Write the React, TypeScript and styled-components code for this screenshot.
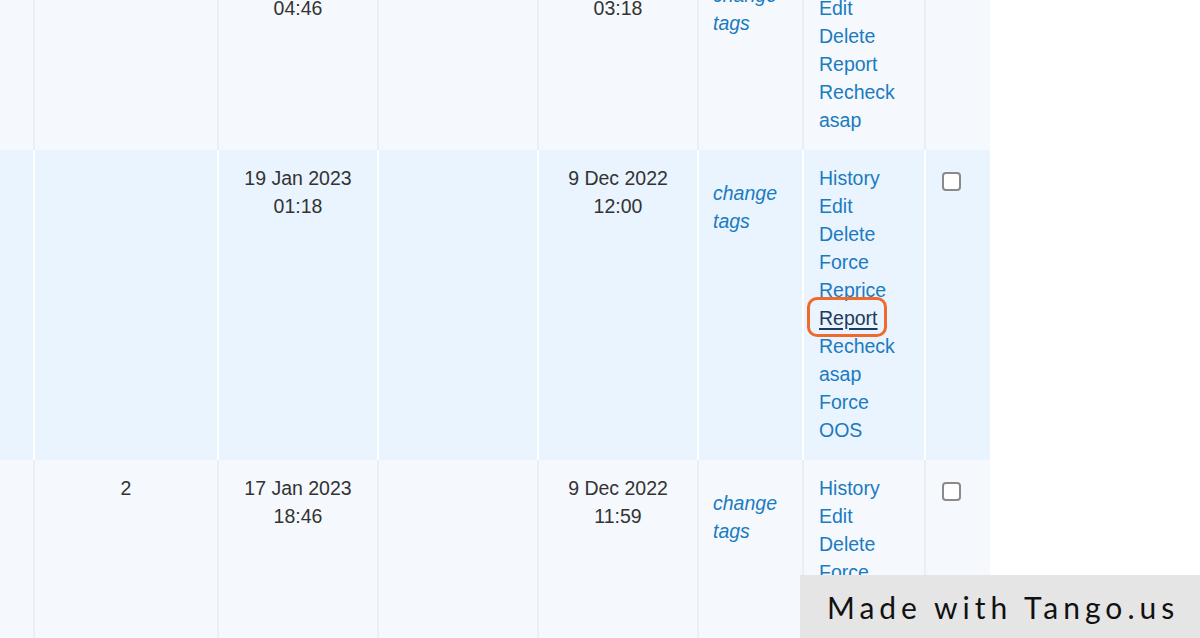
import React from "react";
import styled, { createGlobalStyle } from "styled-components";

const Global = createGlobalStyle`
  html, body { margin: 0; padding: 0; background: #ffffff; }
  body { font-family: "Liberation Sans", Arial, Helvetica, sans-serif; overflow: hidden; }
  #root { width: 1200px; height: 638px; overflow: hidden; position: relative; }
`;

const Viewport = styled.div`
  width: 1200px;
  height: 638px;
  overflow: hidden;
  position: relative;
  background: #ffffff;
`;

const Table = styled.table`
  border-collapse: collapse;
  table-layout: fixed;
  width: 990px;
  margin-top: -48px;
  font-size: 19.5px;
  line-height: 28px;
  color: #333333;
`;

const Row = styled.tr<{ $hl?: boolean }>`
  background: ${(p) => (p.$hl ? "#eaf4fe" : "#f5f9fd")};
  & > td {
    border-left: 2px solid ${(p) => (p.$hl ? "#ffffff" : "#e7eff9")};
  }
  & > td:first-child { border-left: none; }
`;

const Cell = styled.td<{ $align?: "left" | "center"; $h: number }>`
  vertical-align: top;
  text-align: ${(p) => p.$align ?? "center"};
  padding: 14px 14px 16px 14px;
  height: ${(p) => p.$h}px;
  box-sizing: border-box;
`;

const LinkCell = styled(Cell)`
  padding-left: 15px;
  padding-right: 6px;
`;

const Line = styled.div`
  white-space: nowrap;
`;

const TagLink = styled.a`
  display: block;
  margin-top: 15px;
  color: #1b7bc1;
  font-style: italic;
  text-decoration: none;
`;

const ActionLink = styled.a<{ $active?: boolean }>`
  display: block;
  color: ${(p) => (p.$active ? "#1e3a5c" : "#1b7bc1")};
  text-decoration: ${(p) => (p.$active ? "underline" : "none")};
  text-underline-offset: 3px;
  text-decoration-thickness: 1.5px;
  position: relative;
  width: max-content;
`;

const Highlight = styled.span`
  position: absolute;
  left: -12px;
  top: -7px;
  width: 80px;
  height: 40px;
  border: 3px solid #f06a2b;
  border-radius: 10px;
  box-sizing: border-box;
  pointer-events: none;
`;

const Check = styled.input`
  appearance: none;
  -webkit-appearance: none;
  margin: 8px 0 0 2px;
  width: 19px;
  height: 19px;
  border: 2px solid #8a8a8a;
  border-radius: 4px;
  background: #ffffff;
  box-sizing: border-box;
  display: block;
`;

const Badge = styled.div`
  position: absolute;
  right: 0;
  bottom: 0;
  width: 400px;
  height: 63px;
  background: #e5e5e5;
  display: flex;
  align-items: center;
  padding-left: 27px;
  box-sizing: border-box;
  font-family: Lato, "Open Sans", sans-serif;
  font-size: 30px;
  letter-spacing: 5px;
  color: #111111;
`;

type RowData = {
  hl?: boolean;
  h: number;
  count: string;
  date1: [string, string];
  date2: [string, string];
  links: string[];
  active?: string;
  checkbox: boolean;
};

const rows: RowData[] = [
  {
    h: 198,
    count: "",
    date1: ["18 Jan 2023", "04:46"],
    date2: ["9 Dec 2022", "03:18"],
    links: ["History", "Edit", "Delete", "Report", "Recheck", "asap"],
    checkbox: false,
  },
  {
    hl: true,
    h: 310,
    count: "",
    date1: ["19 Jan 2023", "01:18"],
    date2: ["9 Dec 2022", "12:00"],
    links: ["History", "Edit", "Delete", "Force", "Reprice", "Report", "Recheck", "asap", "Force", "OOS"],
    active: "Report",
    checkbox: true,
  },
  {
    h: 310,
    count: "2",
    date1: ["17 Jan 2023", "18:46"],
    date2: ["9 Dec 2022", "11:59"],
    links: ["History", "Edit", "Delete", "Force", "Reprice", "Report", "Recheck", "asap", "Force", "OOS"],
    checkbox: true,
  },
];

export default function App() {
  return (
    <Viewport>
      <Global />
      <Table>
        <colgroup>
          <col style={{ width: 34 }} />
          <col style={{ width: 184 }} />
          <col style={{ width: 160 }} />
          <col style={{ width: 160 }} />
          <col style={{ width: 160 }} />
          <col style={{ width: 105 }} />
          <col style={{ width: 122 }} />
          <col style={{ width: 65 }} />
        </colgroup>
        <tbody>
          {rows.map((r, i) => (
            <Row key={i} $hl={r.hl}>
              <Cell $h={r.h} />
              <Cell $h={r.h}>{r.count}</Cell>
              <Cell $h={r.h}>
                <Line>{r.date1[0]}</Line>
                <Line>{r.date1[1]}</Line>
              </Cell>
              <Cell $h={r.h} />
              <Cell $h={r.h}>
                <Line>{r.date2[0]}</Line>
                <Line>{r.date2[1]}</Line>
              </Cell>
              <Cell $h={r.h} $align="left">
                <TagLink href="#">
                  change
                  <br />
                  tags
                </TagLink>
              </Cell>
              <LinkCell $h={r.h} $align="left">
                {r.links.map((l, j) => {
                  const act = r.active === l && j === 5;
                  return (
                    <ActionLink key={j} href="#" $active={act}>
                      {l}
                      {act && <Highlight />}
                    </ActionLink>
                  );
                })}
              </LinkCell>
              <Cell $h={r.h} $align="left">
                {r.checkbox && <Check type="checkbox" />}
              </Cell>
            </Row>
          ))}
        </tbody>
      </Table>
      <Badge>Made with Tango.us</Badge>
    </Viewport>
  );
}
